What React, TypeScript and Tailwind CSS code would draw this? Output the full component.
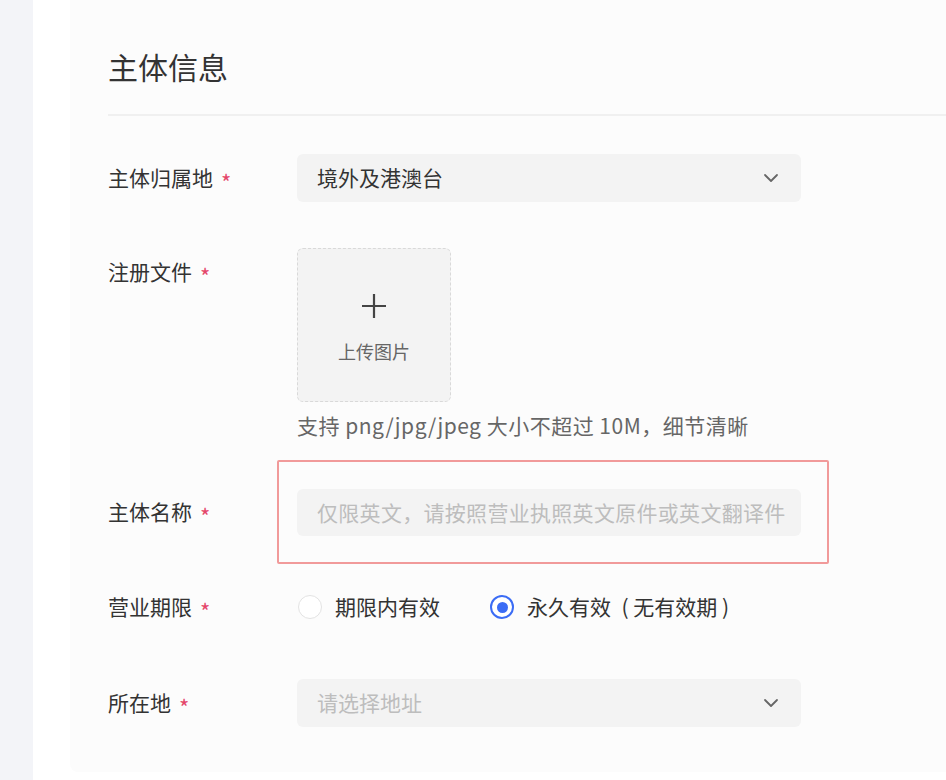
import React from "react";

const font = { fontFamily: '"Noto Sans CJK SC", "Noto Sans", sans-serif' };

function Chevron() {
  return (
    <svg width="16" height="10" viewBox="0 0 16 10" fill="none">
      <path d="M2 2 L8 8 L14 2" stroke="#666" strokeWidth="1.8" strokeLinecap="round" strokeLinejoin="round" />
    </svg>
  );
}

function Label({ text }: { text: string }) {
  return (
    <div className="w-[169px] h-[48px] flex items-center shrink-0 text-[21px] text-[#333]">
      <span>{text}</span>
      <span className="ml-[8px] text-[22px] text-[#e4466a] leading-none mt-[6px]">*</span>
    </div>
  );
}

export default function App() {
  return (
    <div className="flex w-[946px] h-[780px] bg-white overflow-hidden" style={font}>
      <div className="w-[33px] shrink-0 bg-[#f3f4f8]" />
      <div className="w-[37px] shrink-0 bg-white" />
      <div className="w-[900px] shrink-0 h-[772px] bg-[#fcfcfc] rounded-bl-[8px] pl-[38px] pt-[46px]">
        <div className="h-[40px] leading-[40px] text-[30px] text-[#333]">主体信息</div>
        <div className="mt-[28px] h-[2px] bg-[#f0f0f0]" />

        {/* Row 1 */}
        <div className="mt-[38px] flex">
          <Label text="主体归属地" />
          <div className="pl-[20px]">
            <div className="w-[504px] h-[48px] rounded-[6px] bg-[#f3f3f3] flex items-center justify-between pl-[20px] pr-[22px] text-[21px] text-[#333]">
              <span>境外及港澳台</span>
              <Chevron />
            </div>
          </div>
        </div>

        {/* Row 2 */}
        <div className="mt-[46px] flex">
          <Label text="注册文件" />
          <div className="pl-[20px] flex flex-col">
            <div className="w-[154px] h-[154px] rounded-[6px] bg-[#f3f3f3] border border-dashed border-[#d9d9d9] flex flex-col items-center">
              <svg className="mt-[44px]" width="26" height="26" viewBox="0 0 26 26" fill="none">
                <path d="M13 1 V25 M1 13 H25" stroke="#444" strokeWidth="2.2" />
              </svg>
              <div className="mt-[20px] text-[18px] leading-[24px] text-[#666]">上传图片</div>
            </div>
            <div className="mt-[11px] h-[24px] leading-[24px] text-[21px] tracking-[0.5px] text-[#666] whitespace-nowrap">
              支持 png/jpg/jpeg 大小不超过 10M，细节清晰
            </div>
          </div>
        </div>

        {/* Row 3 */}
        <div className="mt-[23px] flex items-center">
          <Label text="主体名称" />
          <div className="border-2 border-[#f19a9a] rounded-[2px] pl-[18px] pr-[26px] pt-[27px] pb-[26px]">
            <div className="w-[504px] h-[47px] rounded-[6px] bg-[#f3f3f3] flex items-center pl-[20px] text-[21px] tracking-[0.3px] text-[#bdbdbd] whitespace-nowrap overflow-hidden">
              仅限英文，请按照营业执照英文原件或英文翻译件
            </div>
          </div>
        </div>

        {/* Row 4 */}
        <div className="mt-[19px] flex">
          <Label text="营业期限" />
          <div className="pl-[21px] h-[48px] flex items-center text-[21px] text-[#333]">
            <span className="w-[24px] h-[24px] rounded-full border-[1.5px] border-[#e3e3e3] bg-white" />
            <span className="ml-[13px]">期限内有效</span>
            <span className="ml-[50px] w-[24px] h-[24px] rounded-full border-2 border-[#3b6cf5] bg-white flex items-center justify-center">
              <span className="w-[11px] h-[11px] rounded-full bg-[#3b6cf5]" />
            </span>
            <span className="ml-[13px] whitespace-pre">{"永久有效\u2002( 无有效期 )"}</span>
          </div>
        </div>

        {/* Row 5 */}
        <div className="mt-[48px] flex">
          <Label text="所在地" />
          <div className="pl-[20px]">
            <div className="w-[504px] h-[48px] rounded-[6px] bg-[#f3f3f3] flex items-center justify-between pl-[20px] pr-[22px] text-[21px] text-[#bdbdbd]">
              <span>请选择地址</span>
              <Chevron />
            </div>
          </div>
        </div>
      </div>
    </div>
  );
}
